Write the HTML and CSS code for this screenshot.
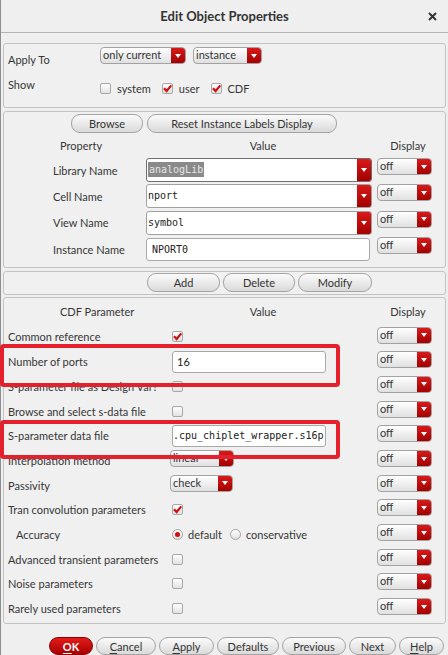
FILE: index.html
```html
<!DOCTYPE html>
<html>
<head>
<meta charset="utf-8">
<link rel="stylesheet" href="styles.css">
</head>
<body>
<div class="win">
  <header class="titlebar">
    <span></span>
    <span class="title">Edit Object Properties</span>
    <span class="close"><svg width="9" height="9" viewBox="0 0 9 9"><path d="M1 1 L8 8 M8 1 L1 8" stroke="#333" stroke-width="2" fill="none"/></svg></span>
  </header>

  <section class="frame f1">
    <div class="r1">
      <span class="lbl1 apply">Apply To</span>
      <span class="dd w86"><span class="dd-t">only current</span><span class="dd-a"></span></span>
      <span class="dd w69"><span class="dd-t">instance</span><span class="dd-a"></span></span>
    </div>
    <div class="r2">
      <span class="lbl1 show">Show</span>
      <span class="chk-item"><span class="cb"></span><span>system</span></span>
      <span class="chk-item"><span class="cb"><svg viewBox="0 0 11 11"><path d="M2 5.2 L4.6 8 L9.3 2.4" stroke="#d40f0f" stroke-width="2.2" fill="none"/></svg></span><span>user</span></span>
      <span class="chk-item"><span class="cb"><svg viewBox="0 0 11 11"><path d="M2 5.2 L4.6 8 L9.3 2.4" stroke="#d40f0f" stroke-width="2.2" fill="none"/></svg></span><span>CDF</span></span>
    </div>
  </section>

  <section class="frame f2">
    <div class="btnrow b2">
      <span class="btn w72">Browse</span>
      <span class="btn w190">Reset Instance Labels Display</span>
    </div>
    <div class="g2 hdr">
      <span class="h-prop">Property</span>
      <span class="h-val">Value</span>
      <span class="h-disp">Display</span>
    </div>
    <div class="g2 row2">
      <span class="lbl2">Library Name</span>
      <span class="combo focus"><span class="c-txt"><span class="sel">analogLib</span></span><span class="dd-a"></span></span>
      <span class="dd disp d1"><span class="dd-t">off</span><span class="dd-a"></span></span>
    </div>
    <div class="g2 row2">
      <span class="lbl2">Cell Name</span>
      <span class="combo"><span class="c-txt">nport</span><span class="dd-a"></span></span>
      <span class="dd disp d1"><span class="dd-t">off</span><span class="dd-a"></span></span>
    </div>
    <div class="g2 row2">
      <span class="lbl2">View Name</span>
      <span class="combo"><span class="c-txt">symbol</span><span class="dd-a"></span></span>
      <span class="dd disp d1"><span class="dd-t">off</span><span class="dd-a"></span></span>
    </div>
    <div class="g2 row2">
      <span class="lbl2">Instance Name</span>
      <span class="ledit"><span class="c-txt">NPORT0</span></span>
      <span class="dd disp d1"><span class="dd-t">off</span><span class="dd-a"></span></span>
    </div>
  </section>

  <section class="frame f3">
    <div class="btnrow b3">
      <span class="btn w73">Add</span>
      <span class="btn w72">Delete</span>
      <span class="btn w74">Modify</span>
    </div>
  </section>

  <section class="frame f4">
    <div class="g4 hdr4">
      <span class="h-cdf">CDF Parameter</span>
      <span class="h-val4">Value</span>
      <span class="h-disp">Display</span>
    </div>
    <div class="g4 row4">
      <span>Common reference</span>
      <span class="v"><span class="cb"><svg viewBox="0 0 11 11"><path d="M2 5.2 L4.6 8 L9.3 2.4" stroke="#d40f0f" stroke-width="2.2" fill="none"/></svg></span></span>
      <span class="dd disp d2"><span class="dd-t">off</span><span class="dd-a"></span></span>
    </div>
    <div class="g4 row4 hl hl1">
      <span>Number of ports</span>
      <span class="v"><span class="tin"><span class="t-sans">16</span></span></span>
      <span class="dd disp d2"><span class="dd-t">off</span><span class="dd-a"></span></span>
    </div>
    <div class="g4 row4">
      <span>S-parameter file as Design Var?</span>
      <span class="v"><span class="cb"></span></span>
      <span class="dd disp d2"><span class="dd-t">off</span><span class="dd-a"></span></span>
    </div>
    <div class="g4 row4">
      <span>Browse and select s-data file</span>
      <span class="v"><span class="cb"></span></span>
      <span class="dd disp d2"><span class="dd-t">off</span><span class="dd-a"></span></span>
    </div>
    <div class="g4 row4 hl hl2">
      <span>S-parameter data file</span>
      <span class="v"><span class="tin"><span class="t-mono">.cpu_chiplet_wrapper.s16p</span></span></span>
      <span class="dd disp d2"><span class="dd-t">off</span><span class="dd-a"></span></span>
    </div>
    <div class="g4 row4">
      <span>Interpolation method</span>
      <span class="v top"><span class="dd w64"><span class="dd-t">linear</span><span class="dd-a"></span></span></span>
      <span class="dd disp d2"><span class="dd-t">off</span><span class="dd-a"></span></span>
    </div>
    <div class="g4 row4">
      <span>Passivity</span>
      <span class="v top"><span class="dd w63"><span class="dd-t">check</span><span class="dd-a"></span></span></span>
      <span class="dd disp d2"><span class="dd-t">off</span><span class="dd-a"></span></span>
    </div>
    <div class="g4 row4">
      <span>Tran convolution parameters</span>
      <span class="v"><span class="cb"><svg viewBox="0 0 11 11"><path d="M2 5.2 L4.6 8 L9.3 2.4" stroke="#d40f0f" stroke-width="2.2" fill="none"/></svg></span></span>
      <span class="dd disp d2"><span class="dd-t">off</span><span class="dd-a"></span></span>
    </div>
    <div class="g4 row4">
      <span class="indent">Accuracy</span>
      <span class="v radios">
        <span class="rad-item"><span class="rb on"></span><span>default</span></span>
        <span class="rad-item"><span class="rb"></span><span>conservative</span></span>
      </span>
      <span class="dd disp d2"><span class="dd-t">off</span><span class="dd-a"></span></span>
    </div>
    <div class="g4 row4">
      <span>Advanced transient parameters</span>
      <span class="v"><span class="cb"></span></span>
      <span class="dd disp d2"><span class="dd-t">off</span><span class="dd-a"></span></span>
    </div>
    <div class="g4 row4">
      <span>Noise parameters</span>
      <span class="v"><span class="cb"></span></span>
      <span class="dd disp d2"><span class="dd-t">off</span><span class="dd-a"></span></span>
    </div>
    <div class="g4 row4">
      <span>Rarely used parameters</span>
      <span class="v"><span class="cb"></span></span>
      <span class="dd disp d2"><span class="dd-t">off</span><span class="dd-a"></span></span>
    </div>
  </section>

  <footer class="bottom">
    <span class="btn ok wok"><u>O</u>K</span>
    <span class="btn wcancel"><u>C</u>ancel</span>
    <span class="btn wapply"><u>A</u>pply</span>
    <span class="btn wdef">Defaults</span>
    <span class="btn wprev">Previous</span>
    <span class="btn wnext">Next</span>
    <span class="btn whelp"><u>H</u>elp</span>
  </footer>
</div>
</body>
</html>
```

FILE: styles.css
```css
* { box-sizing: border-box; }
html, body { margin: 0; padding: 0; }
body {
  width: 448px;
  height: 655px;
  overflow: hidden;
  background: #efefef;
  font-family: Lato, "Noto Sans", sans-serif;
  font-size: 11px;
  color: #363636;
}
.win {
  height: 655px;
  border-left: 1px solid #8e8e8e;
  display: flex;
  flex-direction: column;
}
.titlebar {
  height: 33px;
  flex: none;
  border-bottom: 1px solid #b4b4b4;
  display: grid;
  grid-template-columns: 1fr auto 1fr;
  align-items: center;
  background: #efefef;
}
.title { font-weight: bold; font-size: 13px; color: #333; }
.close { justify-self: end; margin-right: 11px; display: flex; }

.frame {
  flex: none;
  margin: 0 2px;
  border: 1px solid #c3c3c3;
  border-radius: 3px;
  background: #f0f0f0;
}
.f1 { margin-top: 10px; height: 65px; padding: 3px 0 0 4px; }
.f2 { margin-top: 3px; height: 157px; padding: 2px 0 0 0; }
.f3 { margin-top: 3px; height: 24px; padding: 1px 0 0 0; }
.f4 { margin-top: 2px; height: 327px; }

/* frame 1 */
.r1 { display: flex; height: 17px; gap: 7px; }
.r2 { display: flex; height: 20px; margin-top: 14px; align-items: center; }
.lbl1 { width: 92px; line-height: 15px; flex: none; }
.apply { margin-top: 5px; margin-right: -7px; align-self: flex-start; }
.show { align-self: flex-start; margin-top: -1.5px; }
.chk-item { display: flex; align-items: center; gap: 6px; margin-right: 11px; }
.r2 .chk-item:first-of-type { margin-left: 2px; }

/* dropdown */
.dd {
  display: inline-flex;
  height: 17px;
  border: 1px solid #a2a2a2;
  border-radius: 4px;
  background: linear-gradient(#ffffff, #e0e0e0);
  overflow: hidden;
  flex: none;
}
.dd-t { flex: 1; padding-left: 2px; line-height: 14px; color: #333; white-space: nowrap; }
.dd-a {
  width: 14px;
  flex: none;
  background: linear-gradient(#d81a1a, #a30000);
  display: flex;
  align-items: center;
  justify-content: center;
}
.dd-a::after {
  content: "";
  width: 0; height: 0;
  border-left: 3px solid transparent;
  border-right: 3px solid transparent;
  border-top: 4px solid #fff;
}
.w86 { width: 86px; }
.w69 { width: 69px; }
.w64 { width: 64px; }
.w63 { width: 63px; }
.disp { width: 55px; }
.d1 { align-self: start; margin-top: 1px; }
.d2 { align-self: start; margin-top: 2px; }

/* checkbox / radio */
.cb {
  width: 11px; height: 11px;
  border: 1px solid #a8a8a8;
  border-radius: 2px;
  background: linear-gradient(#ffffff, #e2e2e2);
  display: inline-flex;
  flex: none;
}
.cb svg { width: 11px; height: 11px; margin: -1px; }
.rb {
  width: 11px; height: 11px;
  border: 1px solid #a3a3a3;
  border-radius: 50%;
  background: linear-gradient(#ffffff, #e0e0e0);
  display: inline-flex;
  align-items: center;
  justify-content: center;
  flex: none;
}
.rb.on::after {
  content: "";
  width: 5px; height: 5px;
  border-radius: 50%;
  background: #d20c0c;
}

/* buttons */
.btn {
  display: inline-flex;
  align-items: center;
  justify-content: center;
  height: 19px;
  border: 1px solid #a4a4a4;
  border-radius: 9px;
  background: linear-gradient(#fbfbfb, #dadada);
  color: #333;
  flex: none;
  white-space: nowrap;
}
.btn u { text-decoration-thickness: 1px; text-underline-offset: 2px; }
.btnrow { display: flex; gap: 4px; }
.b2 { margin-left: 67px; }
.b3 { margin-left: 143px; gap: 3px; }
.w72 { width: 72px; }
.w73 { width: 73px; }
.w74 { width: 74px; }
.w190 { width: 190px; }

/* frame 2 grid */
.g2 {
  display: grid;
  grid-template-columns: 137px 226px 55px;
  column-gap: 5px;
}
.hdr { height: 24px; align-items: center; }
.h-prop { padding-left: 56px; }
.h-val { text-align: center; padding-left: 8px; }
.h-disp { text-align: center; padding-left: 7px; }
.row2 { height: 26.3px; align-items: center; }
.lbl2 { padding-left: 49px; }
.combo {
  height: 24px;
  border: 1px solid #a0a0a0;
  border-radius: 3px;
  background: #fff;
  display: flex;
  overflow: hidden;
}
.combo.focus { border-color: #6f6f6f; }
.combo .dd-a { width: 14px; }
.c-txt {
  flex: 1;
  font-family: "DejaVu Sans Mono", monospace;
  font-size: 10px;
  line-height: 22px;
  padding-left: 1px;
  color: #222;
}
.sel { background: #8a8a8a; color: #e6e6e6; padding: 2px 1px; }
.ledit {
  height: 23px;
  width: 224px;
  border: 1px solid #a8a8a8;
  border-radius: 3px;
  background: #fff;
  display: flex;
  padding-left: 4px;
}
.ledit .c-txt { line-height: 21px; }

/* frame 4 grid */
.g4 {
  display: grid;
  grid-template-columns: 155px 200px 55px;
  column-gap: 7px;
  padding-left: 4px;
}
.hdr4 { height: 26.6px; align-items: center; }
.h-cdf { padding-left: 52px; }
.h-val4 { text-align: center; padding-right: 14px; }
.row4 { height: 24.7px; align-items: center; white-space: nowrap; }
.v { display: flex; align-items: center; }
.v > .cb { margin-left: 2px; }
.v.top { align-self: start; margin-top: 2px; }
.indent { padding-left: 8px; }
.tin {
  width: 154px;
  height: 22px;
  margin-left: 2px;
  border: 1px solid #a8a8a8;
  border-radius: 3px;
  background: #fff;
  display: flex;
  align-items: center;
  overflow: hidden;
}
.t-sans { padding-left: 4px; color: #222; }
.t-mono { font-family: "DejaVu Sans Mono", monospace; font-size: 10px; color: #222; padding-left: 0; }
.radios { gap: 0; margin-left: 2px; }
.rad-item { display: flex; align-items: center; gap: 5px; margin-right: 8px; }

.hl { position: relative; }
.hl::after {
  content: "";
  position: absolute;
  left: -4px;
  border: 4px solid #e3202b;
  border-radius: 4px;
  width: 332px;
  pointer-events: none;
}
.hl1::after { top: -5px; height: 35px; }
.hl2::after { top: -3px; height: 31px; }

/* bottom */
.bottom {
  display: flex;
  gap: 3px;
  padding-left: 48px;
  margin-top: 13px;
}
.bottom .btn { height: 18px; }
.ok {
  background: linear-gradient(#e41a1a, #a90000);
  border-color: #8a0000;
  color: #fff;
  font-weight: bold;
}
.wok { width: 44px; }
.wcancel { width: 60px; }
.wapply { width: 55px; }
.wdef { width: 62px; }
.wprev { width: 64px; }
.wnext { width: 47px; }
.whelp { width: 45px; }
```
